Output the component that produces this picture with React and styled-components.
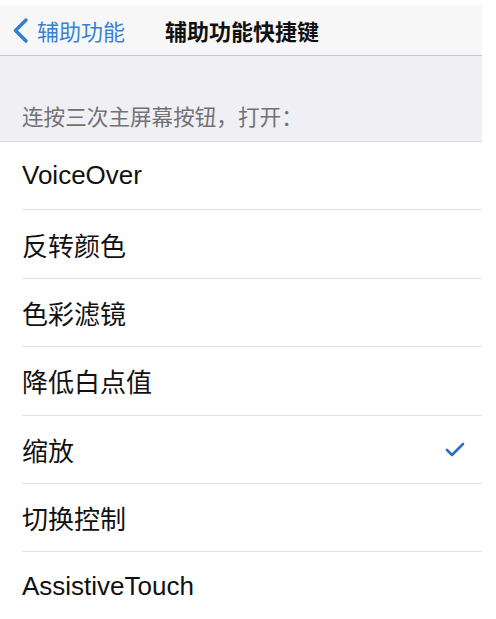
import styled, { createGlobalStyle } from 'styled-components';

const GlobalStyle = createGlobalStyle`
    body {
        margin: 0;
        background: #fff;
        font-family: "Liberation Sans", "Noto Sans CJK SC", sans-serif;
    }
`;

const items = ['VoiceOver', '反转颜色', '色彩滤镜', '降低白点值', '缩放', '切换控制', 'AssistiveTouch'];
const selected = '缩放';

const App = () => {
    return (
        <Page>
            <GlobalStyle />
            <NavBar>
                <Back>
                    <svg width="17" height="25" viewBox="0 0 17 25">
                        <path d="M14 2 L3.5 12.5 L14 23" fill="none" stroke="#2f7fd3" strokeWidth="3.4" strokeLinecap="round" strokeLinejoin="round" />
                    </svg>
                    <BackLabel>辅助功能</BackLabel>
                </Back>
                <Title>辅助功能快捷键</Title>
            </NavBar>
            <SectionHeader>连按三次主屏幕按钮，打开：</SectionHeader>
            <List>
                {items.map((item, i) => (
                    <Row key={item} last={i === items.length - 1}>
                        <Label>{item}</Label>
                        {item === selected &&
                            <svg width="20" height="15" viewBox="0 0 20 15">
                                <path d="M2 8 L7 13 L18 2" fill="none" stroke="#2d6fb8" strokeWidth="2.6" strokeLinecap="round" strokeLinejoin="round" />
                            </svg>
                        }
                    </Row>
                ))}
            </List>
        </Page>
    );
}

const Page = styled.div`
    width: 482px;
    padding-top: 5px;
`;

const NavBar = styled.div`
    height: 50px;
    background: #f7f7f8;
    border-bottom: 1px solid #c9c9cc;
    display: flex;
    align-items: center;
    padding-left: 12px;
`;

const Back = styled.div`
    display: flex;
    align-items: center;
    gap: 8px;
    width: 153px;
`;

const BackLabel = styled.span`
    font-size: 22px;
    color: #3582d2;
    font-family: "Noto Sans CJK SC", sans-serif;
`;

const Title = styled.span`
    font-size: 22px;
    font-weight: 700;
    color: #111;
    font-family: "Noto Sans CJK SC", sans-serif;
`;

const SectionHeader = styled.div`
    height: 86px;
    box-sizing: border-box;
    background: #efeff4;
    border-bottom: 1px solid #dcdce0;
    padding: 0 0 10px 22px;
    display: flex;
    align-items: flex-end;
    font-size: 21.6px;
    color: #727276;
    font-family: "Noto Sans CJK SC", sans-serif;
`;

const List = styled.div`
    background: #fff;
    padding-left: 22px;
`;

const Row = styled.div`
    height: 67.4px;
    display: flex;
    align-items: center;
    justify-content: space-between;
    padding-right: 17px;
    border-bottom: ${p => p.last ? 'none' : '1px solid #e0e0e3'};
`;

const Label = styled.span`
    font-size: 26px;
    color: #111;
`;

export default App;
